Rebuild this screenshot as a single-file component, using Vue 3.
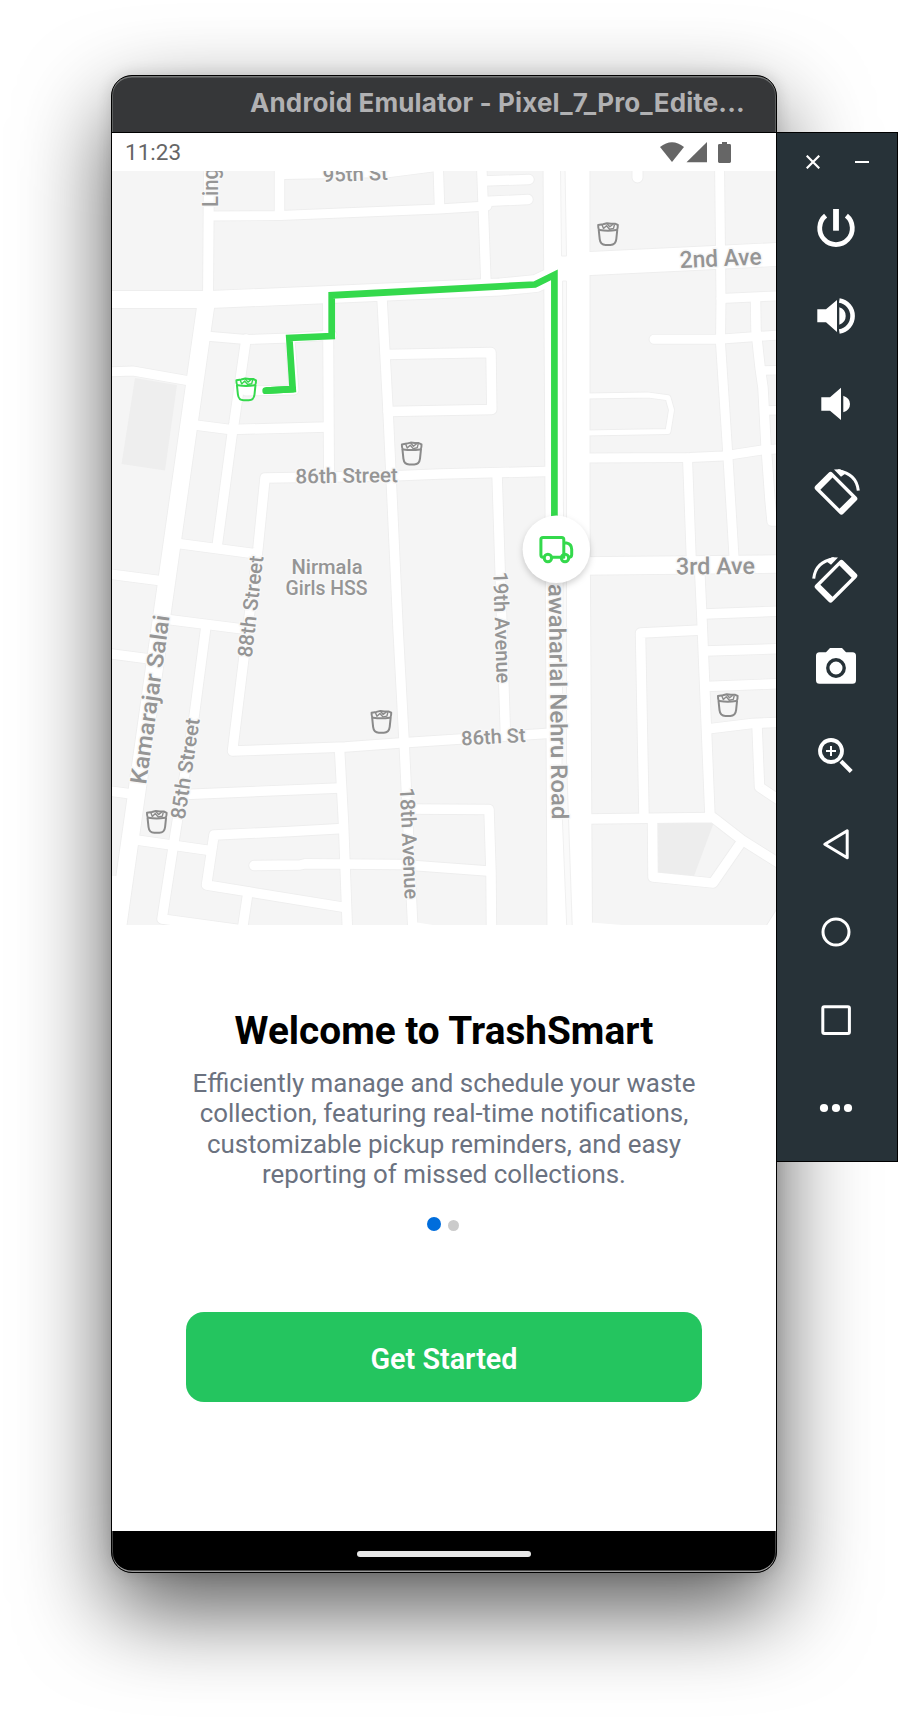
<script setup>
const roads = [
  { w: 17, d: 'M206 304L117 932' },
  { w: 10, d: 'M209 160L208 304' },
  { w: 17, d: 'M105 299.5L210 299.5L330 294.5L500 287L536 283.5L556 274' },
  { w: 23, d: 'M580 264L715 257.5L785 254' },
  { w: 17.5, d: 'M580 566L785 564' },
  { w: 9, d: 'M719.5 160L721 300L720.5 343L727.5 450L734.5 565' },
  { w: 10, d: 'M637.5 160L637.5 177.5' },
  { w: 9.5, d: 'M279.5 160L279.5 214' },
  { w: 9, d: 'M209 216L280 215.5L439 209L487 206' },
  { w: 9, d: 'M283 174.5L390 172.5L433 167' },
  { w: 9.5, d: 'M438 160L439.5 206' },
  { w: 9.5, d: 'M481.5 160L486 284' },
  { w: 9.5, d: 'M483 181L529 179.5' },
  { w: 9.5, d: 'M484 201.5L528 199.5' },
  { w: 9.5, d: 'M382 298L388 410L398 628L404 740L413 932' },
  { w: 10, d: 'M328 298L329 475' },
  { w: 9, d: 'M205 336L246 339.5L290 338L332 335' },
  { w: 9.5, d: 'M246 339L234 423L232 435L217 547' },
  { w: 9.5, d: 'M195 425L230 429.5L328 427' },
  { w: 9, d: 'M290 340L294 390L246 391' },
  { w: 9, d: 'M105 372L133 371L190 381' },
  { w: 9.5, d: 'M545 471.5L440 474L390 476L265 478L258 548L244 657L232.5 751L345 747L400 743L546 733.5' },
  { w: 9.5, d: 'M178 543.5L257 554' },
  { w: 9.5, d: 'M105 573.5L163 581' },
  { w: 9.5, d: 'M168 619.5L247 629.5' },
  { w: 9.5, d: 'M206 626L194 717L174.7 837L162 919L250 931' },
  { w: 9.5, d: 'M105 653L150 659' },
  { w: 9.5, d: 'M105 790.5L132 794' },
  { w: 9.5, d: 'M185 794.5L340 788' },
  { w: 9.5, d: 'M339.5 748L343.5 823L347.5 932' },
  { w: 9.5, d: 'M133 839.5L210 850.5' },
  { w: 9.5, d: 'M343 828.5L290 831.5L214 835L206.5 885L345 907.5' },
  { w: 9.5, d: 'M248 892L242 932' },
  { w: 9.5, d: 'M254 865.5L300 865L305 863.8L400 864.5L488 871' },
  { w: 9.5, d: 'M408 809L489 809.5L491 873L491.5 932' },
  { w: 9.5, d: 'M497 473L500 567L505.5 736' },
  { w: 9.5, d: 'M386 354.5L491 352.5L491.8 409.5L388 411.5' },
  { w: 9, d: 'M654 339.3L718 339.3L785 334.5' },
  { w: 9, d: 'M721 298.5L785 295.5' },
  { w: 9.5, d: 'M755.5 298L756 330L760 367L763 388L766 445L770 500L772 521L785 521' },
  { w: 8.5, d: 'M762 370.5L785 370' },
  { w: 8.5, d: 'M765 410.5L785 410' },
  { w: 5, d: 'M586 396L648 395L668 397.7L671.5 410L668 431.5L586 433' },
  { w: 9, d: 'M585 458L690 457.5L723 456L762 450L785 448.5' },
  { w: 9, d: 'M687.5 458L691.5 565' },
  { w: 9.5, d: 'M699.5 566L702 620L710 817' },
  { w: 9.5, d: 'M704 614L785 611' },
  { w: 9.5, d: 'M705 651L785 648.5' },
  { w: 9.5, d: 'M706 686.5L785 683.5' },
  { w: 9.5, d: 'M707 729L752 723.5L785 722' },
  { w: 9.5, d: 'M757 725L759.5 787L785 804' },
  { w: 9.5, d: 'M702 630L640.5 633L644 817' },
  { w: 9.5, d: 'M586 819L713 817.5L742 840L785 867' },
  { w: 9.5, d: 'M652.5 820L653 877L713 883L742 841' },
  { w: 12, d: 'M768 935L790 900' },
]

const highway = 'M543.5 160L545 400L547.5 935H592L589.5 500L589.5 160Z'

const labels = [
  { t: '95th St', x: 323, y: 182, a: -2, s: 20, l: 65 },
  { t: '2nd Ave', x: 680, y: 268, a: -2.5, s: 23.5, l: 82 },
  { t: '3rd Ave', x: 676, y: 574.5, a: -0.5, s: 23.5, l: 79 },
  { t: '86th Street', x: 295.5, y: 483.5, a: -0.8, s: 20.5, l: 102.5 },
  { t: 'Nirmala', x: 291.5, y: 574, a: 0, s: 19.5, l: 71 },
  { t: 'Girls HSS', x: 285.5, y: 595.3, a: 0, s: 19.5, l: 82 },
  { t: '86th St', x: 461.5, y: 745.5, a: -3.2, s: 20, l: 64.5 },
  { t: 'Ling', x: 218, y: 207, a: -90, s: 22.5, l: 39 },
  { t: '88th Street', x: 251.7, y: 658, a: -83.4, s: 20.5, l: 102 },
  { t: 'Kamarajar Salai', x: 146, y: 785, a: -82, s: 23, l: 170.5 },
  { t: '85th Street', x: 184.8, y: 820, a: -81.5, s: 20.5, l: 102 },
  { t: '19th Avenue', x: 493.2, y: 572, a: 88.2, s: 20.5, l: 111.5 },
  { t: '18th Avenue', x: 399.8, y: 788, a: 87.4, s: 20.5, l: 111.5 },
  { t: 'awaharlal Nehru Road', x: 548.6, y: 584, a: 89.2, s: 23, l: 235.5 },
]

const bins = [
  { x: 608, y: 234, c: '#8a8a8a' },
  { x: 411.7, y: 453.4, c: '#8a8a8a' },
  { x: 381.4, y: 721.7, c: '#8a8a8a' },
  { x: 156.8, y: 821.8, c: '#8a8a8a' },
  { x: 727.8, y: 705, c: '#8a8a8a' },
  { x: 246.2, y: 389.3, c: '#34d94c' },
]
</script>

<template>
  <div class="desktop">
    <div class="phone">
      <header class="titlebar"><span class="title">Android Emulator - Pixel_7_Pro_Edite...</span></header>
      <div class="screen">
        <div class="status">
          <span class="clock">11:23</span>
          <svg class="status-icons" width="72" height="22" viewBox="660 140 72 22" fill="#666">
            <path d="M660 146Q672 136.400 684 146L672 161Z" />
            <path d="M707 141V161.300H686.500Z" />
            <path d="M722 141h5v2h2.600q1.400 0 1.400 1.400v16.200q0 1.400-1.400 1.400h-10.200q-1.400 0-1.400-1.400v-16.200q0-1.400 1.400-1.400h2.600z" />
          </svg>
        </div>

        <svg class="map" width="664" height="754" viewBox="112 171 664 754">
          <rect x="112" y="171" width="664" height="754" fill="#f5f5f5" />
          <path d="M135 378L177 385L165 470.500L121.500 464Z" fill="#eee" />
          <path d="M656 822H714L694 876H656Z" fill="#ededed" />
          <g fill="none" stroke="#eee" stroke-linecap="round" stroke-linejoin="round">
            <path v-for="(r, i) in roads" :key="i" :d="r.d" :stroke-width="r.w + 1.8" />
            <path :d="highway" stroke-width="2" />
          </g>
          <g fill="none" stroke="#fff" stroke-linecap="round" stroke-linejoin="round">
            <path v-for="(r, i) in roads" :key="i" :d="r.d" :stroke-width="r.w" />
          </g>
          <path :d="highway" fill="#fff" />
          <path d="M112 876L117 876V925H112ZM591 922.500L622 925H591ZM417 922.500L433 925H417Z" fill="#fff" />
          <g fill="#fafafa" stroke="#f0f0f0" stroke-width="1">
            <path d="M560.500 168L561.500 256L566.500 256L565 168Z" />
            <path d="M562.500 281L563.500 520L561.800 805L566.800 928H572.300L566.500 760L566.500 281Z" />
          </g>

          <path d="M265.700 390.700L292.700 389.200" class="route" stroke-linecap="round" />
          <path d="M265.700 390.700L292.700 389.200L289.300 338L331.700 336V295.300L535 284.500L554.400 274.800V520" class="route" />

          <g class="labels">
            <text
              v-for="l in labels"
              :key="l.t"
              :transform="`translate(${l.x} ${l.y}) rotate(${l.a})`"
              :font-size="l.s"
              :textLength="l.l"
              lengthAdjust="spacingAndGlyphs"
            >{{ l.t }}</text>
          </g>

          <g v-for="(b, i) in bins" :key="i" :transform="`translate(${b.x} ${b.y})`" fill="none" :stroke="b.c" stroke-width="2" stroke-linejoin="round">
            <path d="M-9.300 -4.500L-8.300 5.200Q-7.600 11 -2.500 11H2.500Q7.600 11 8.300 5.200L9.300 -4.500" />
            <path d="M-9.800 -9Q-9.800 -4.200 -8.200 -4Q0 -2.700 8.200 -4Q9.800 -4.200 9.800 -9L7 -10.300L3 -10.300L-1 -10.800L-5 -9.800Z" />
            <path d="M-6 -9.200L-4.500 -5.400L-1.500 -8.200L1.500 -4.800L5.500 -5.600L6.500 -9.500M-1 -10.400L1.800 -7.200L5 -9.800" stroke-width="1.400" />
          </g>

          <circle cx="556.300" cy="549.300" r="33.700" class="truck-disc" />
          <g fill="none" stroke="#34d94c" stroke-width="3" stroke-linejoin="round">
            <path d="M543.800 557.200H543Q540.900 557.200 540.900 555.100V539.600Q540.900 537.500 543 537.500H561.700Q563.800 537.500 563.800 539.600V557.200H551.800" />
            <path d="M563.800 542.900H566.500Q571.700 543.800 571.700 549.500V554.500Q571.700 557.200 569 557.200" />
            <circle cx="547.900" cy="558" r="3.700" />
            <circle cx="565" cy="558" r="3.700" />
          </g>
        </svg>

        <main class="intro">
          <h1>Welcome to TrashSmart</h1>
          <p>
            Efficiently manage and schedule your waste<br />
            collection, featuring real-time notifications,<br />
            customizable pickup reminders, and easy<br />
            reporting of missed collections.
          </p>
          <div class="pager"><i class="on"></i><i></i></div>
          <button>Get Started</button>
        </main>
      </div>
      <footer class="navbar"><span class="handle"></span></footer>
    </div>

    <aside class="tools">
      <div class="window-buttons">
        <svg width="14" height="14" viewBox="0 0 14 14"><path d="M.7 .7L13.300 13.300M13.300 .7L.7 13.300" stroke="#fff" stroke-width="2.200" /></svg>
        <svg width="14" height="14" viewBox="0 0 14 14"><path d="M0 7H14" stroke="#fff" stroke-width="2" /></svg>
      </div>
      <!-- power -->
      <div class="tool"><svg viewBox="-24 -24 48 48"><path d="M-10.400 -12.300A16.300 16.300 0 1 0 10.400 -12.300" fill="none" stroke="#fff" stroke-width="4.800" /><rect x="-2.900" y="-19" width="5.800" height="21.700" fill="#fff" /></svg></div>
      <!-- volume up -->
      <div class="tool"><svg viewBox="-24 -24 48 48"><path d="M-18.700 -6.700H-10L1 -16V16L-10 6.300H-18.700ZM3.300 -8.700Q9.700 -6.500 9.700 0Q9.700 6.500 3.300 8.700Z" fill="#fff" /><path d="M3.300 -15.600A15.800 15.800 0 0 1 3.300 15.600" fill="none" stroke="#fff" stroke-width="4.600" /></svg></div>
      <!-- volume down -->
      <div class="tool"><svg viewBox="-24 -24 48 48"><path d="M-14.700 -6.700H-6L5 -16.300V16L-6 6.700H-14.700ZM7.300 -8.300Q14 -6 14 0Q14 6 7.300 8.300Z" fill="#fff" /></svg></div>
      <!-- rotate left -->
      <div class="tool"><svg viewBox="-24 -24 48 48"><g transform="translate(0 1.200)"><path transform="rotate(45)" fill="#fff" fill-rule="evenodd" d="M-17 -12H17Q19.700 -12 19.700 -9.300V9.300Q19.700 12 17 12H-17Q-19.700 12 -19.700 9.300V-9.300Q-19.700 -12 -17 -12ZM-13.500 -8.600V8.600H13.500V-8.600Z" /><path d="M2 -22.400Q20.500 -19.500 22.300 -2.500" fill="none" stroke="#fff" stroke-width="3" /><path d="M-2 -23.600L4 -24L10.500 -20.500L5 -16.500Z" fill="#fff" /></g></svg></div>
      <!-- rotate right -->
      <div class="tool"><svg viewBox="-24 -24 48 48"><g transform="translate(0 1.200) scale(-1 1)"><path transform="rotate(45)" fill="#fff" fill-rule="evenodd" d="M-17 -12H17Q19.700 -12 19.700 -9.300V9.300Q19.700 12 17 12H-17Q-19.700 12 -19.700 9.300V-9.300Q-19.700 -12 -17 -12ZM-13.500 -8.600V8.600H13.500V-8.600Z" /><path d="M2 -22.400Q20.500 -19.500 22.300 -2.500" fill="none" stroke="#fff" stroke-width="3" /><path d="M-2 -23.600L4 -24L10.500 -20.500L5 -16.500Z" fill="#fff" /></g></svg></div>
      <!-- camera -->
      <div class="tool"><svg viewBox="-24 -24 48 48"><path d="M-6 -20H6L10 -15.800H16.500Q20 -15.800 20 -12.300V12.200Q20 15.700 16.500 15.700H-16.500Q-20 15.700 -20 12.200V-12.300Q-20 -15.800 -16.500 -15.800H-10Z" fill="#fff" /><circle r="8.200" fill="none" stroke="#273238" stroke-width="3.400" /></svg></div>
      <!-- zoom in -->
      <div class="tool"><svg viewBox="-24 -24 48 48" fill="none" stroke="#fff"><circle cx="-5" cy="-5" r="11" stroke-width="3.800" /><path d="M-10 -5H0M-5 -10V0" stroke-width="2" /><path d="M5 5.300L15.200 15.500" stroke-width="4.200" /></svg></div>
      <!-- back -->
      <div class="tool"><svg viewBox="-24 -24 48 48" fill="none" stroke="#fff" stroke-width="3" stroke-linejoin="round"><path d="M11.200 -13.200V13.800L-11.200 .3Z" /></svg></div>
      <!-- home -->
      <div class="tool"><svg viewBox="-24 -24 48 48" fill="none" stroke="#fff" stroke-width="3"><circle r="13" /></svg></div>
      <!-- overview -->
      <div class="tool"><svg viewBox="-24 -24 48 48" fill="none" stroke="#fff" stroke-width="3"><rect x="-13.200" y="-13.200" width="26.600" height="26.600" rx="1.500" /></svg></div>
      <!-- more -->
      <div class="tool"><svg viewBox="-24 -24 48 48" fill="#fff"><circle cx="-12" r="4.100" /><circle r="4.100" /><circle cx="12" r="4.100" /></svg></div>
    </aside>
  </div>
</template>

<style>
body {
  margin: 0;
  background: #fff;
}
</style>

<style scoped>
.desktop {
  box-sizing: border-box;
  width: 898px;
  height: 1720px;
  padding: 75px 0 0 111px;
  display: flex;
  align-items: flex-start;
  overflow: hidden;
  background: #fff;
  font-family: Roboto, "Liberation Sans", sans-serif;
}
.phone {
  position: relative;
  box-sizing: border-box;
  flex: none;
  width: 666px;
  height: 1498px;
  border: 1px solid #000;
  border-radius: 21px;
  overflow: hidden;
  background: #000;
  display: flex;
  flex-direction: column;
  box-shadow: 0 36px 90px rgba(0, 0, 0, 0.66), 0 0 16px rgba(0, 0, 0, 0.14);
}
.titlebar {
  box-sizing: border-box;
  flex: none;
  height: 57px;
  background: #363739;
  border-bottom: 1px solid #000;
  border-radius: 20px 20px 0 0;
  box-shadow: inset 0 2px 0 -0.5px #757777, inset 1px 0 0 #5c5e5e, inset -1px 0 0 #5c5e5e;
  display: flex;
  align-items: center;
  padding-left: 138px;
}
.title {
  font: 700 26px/36px Inter, "Liberation Sans", sans-serif;
  letter-spacing: 0.13px;
  color: #b1b1b3;
  white-space: nowrap;
  margin-top: -2px;
}
.screen {
  flex: none;
  height: 1398px;
  background: #fff;
  display: flex;
  flex-direction: column;
}
.status {
  box-sizing: border-box;
  flex: none;
  height: 38px;
  padding: 0 44px 0 13px;
  display: flex;
  align-items: center;
  justify-content: space-between;
}
.clock {
  font-size: 22.5px;
  line-height: 26px;
  color: #666;
}
.status-icons {
  display: block;
}
.map {
  flex: none;
  display: block;
}
.route {
  fill: none;
  stroke: #34d94c;
  stroke-width: 6.7;
}
.labels {
  fill: #959595;
  stroke: #f8f8f8;
  stroke-width: 3px;
  stroke-linejoin: round;
  paint-order: stroke;
  font-weight: 500;
}
.truck-disc {
  fill: #fff;
  filter: drop-shadow(0 3px 3px rgba(0, 0, 0, 0.18));
}
.intro {
  flex: 1;
  display: flex;
  flex-direction: column;
  align-items: center;
}
h1 {
  margin: 83px 0 0;
  font-size: 38.75px;
  line-height: 46px;
  font-weight: 700;
  color: #000;
  white-space: nowrap;
}
p {
  margin: 14px 0 0;
  font-size: 25.9px;
  line-height: 30.4px;
  color: #6b7280;
  text-align: center;
  white-space: nowrap;
}
.pager {
  margin: 27px 3px 0 0;
  height: 14px;
  display: flex;
  align-items: flex-end;
  gap: 7px;
}
.pager i {
  width: 11px;
  height: 11px;
  border-radius: 50%;
  background: #cbcbcb;
}
.pager .on {
  width: 14px;
  height: 14px;
  background: #006ddc;
}
button {
  margin: 81px 0 0;
  width: 516px;
  height: 90px;
  padding: 4px 0 0;
  border: 0;
  border-radius: 18px;
  background: #24c55f;
  color: #fff;
  font: 600 28.8px/34px Roboto, sans-serif;
}
.navbar {
  flex: 1;
  background: #000;
  border-radius: 0 0 20px 20px;
  box-shadow: inset 0 -2px 0 -0.5px #9a9a9a, inset 1px 0 0 #444, inset -1px 0 0 #444;
  display: flex;
  justify-content: center;
}
.handle {
  margin-top: 20px;
  width: 174px;
  height: 6px;
  border-radius: 3px;
  background: #e8e8e8;
}
.tools {
  position: relative;
  box-sizing: border-box;
  flex: none;
  width: 122px;
  height: 1030px;
  margin: 57px 0 0 -1px;
  padding-right: 2px;
  border: 1px solid #000;
  background: #273238;
  display: flex;
  flex-direction: column;
}
.window-buttons {
  box-sizing: border-box;
  height: 51px;
  padding: 22px 0 0 29px;
  display: flex;
  gap: 35px;
}
.window-buttons svg {
  display: block;
}
.tool {
  height: 88px;
  display: flex;
  align-items: center;
  justify-content: center;
}
.tool svg {
  display: block;
  width: 48px;
  height: 48px;
  overflow: visible;
}
</style>
